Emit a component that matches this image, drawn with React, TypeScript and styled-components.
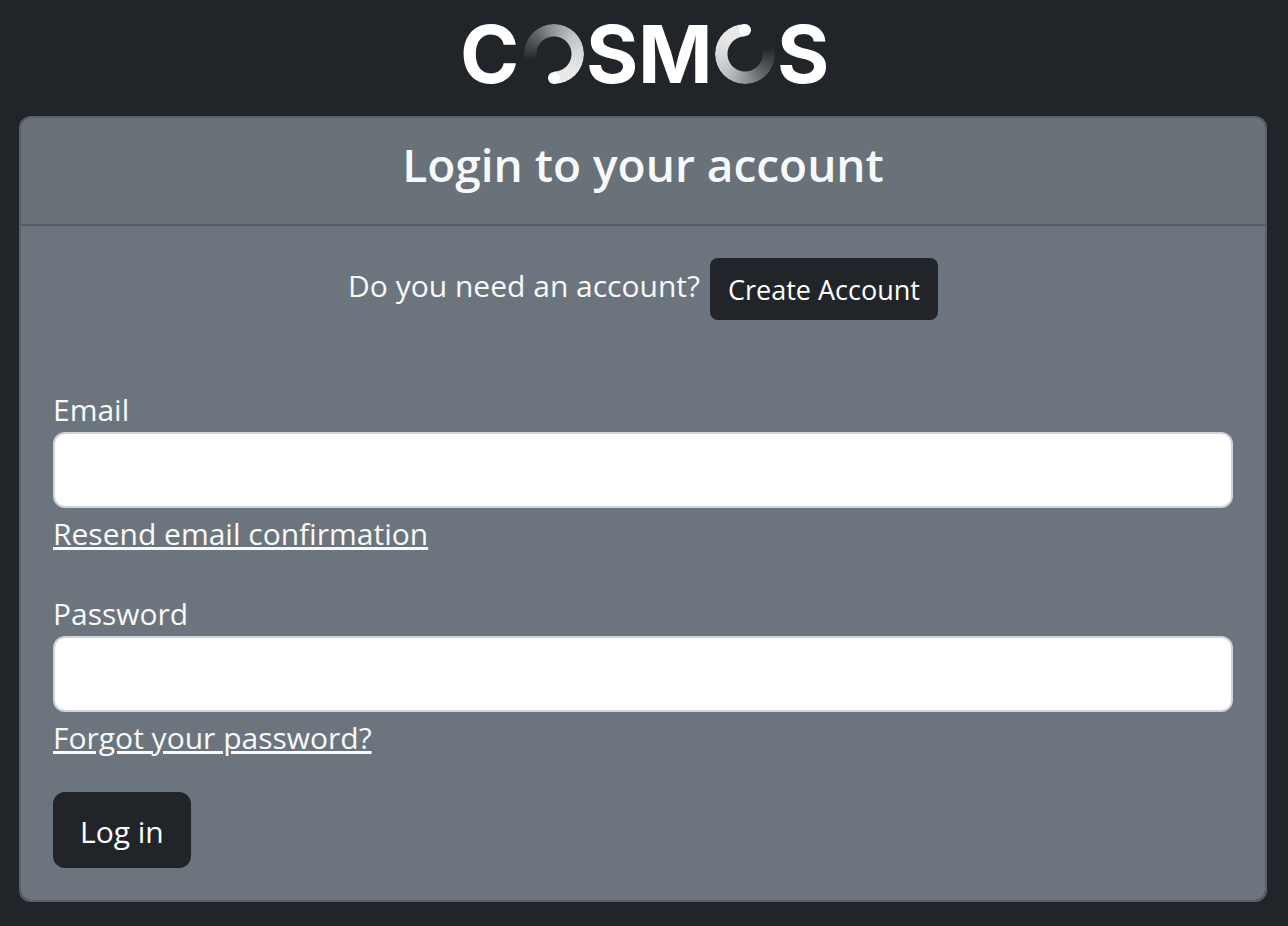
import React from "react";
import styled, { createGlobalStyle } from "styled-components";

const GlobalStyle = createGlobalStyle`
  *, *::before, *::after { box-sizing: border-box; }
  body {
    margin: 0;
    background: #212529;
    color: #f8f9fa;
    font-family: "Open Sans", "Noto Sans", sans-serif;
    font-size: 30px;
    line-height: 48px;
  }
`;

const Page = styled.div`
  display: flex;
  flex-direction: column;
  padding: 24px 21px 24px 19px;
`;

const Brand = styled.header`
  display: flex;
  justify-content: center;
  margin-bottom: 32px;
`;

const LogoSvg = styled.svg`
  display: block;
  overflow: visible;
  width: 366px;
  height: 60px;
`;

const LogoLetter = styled.text`
  font-family: Inter, sans-serif;
  font-size: 80px;
  font-weight: 700;
  fill: #fff;
`;

const RingSweep = styled.div`
  width: 60px;
  height: 60px;
  border-radius: 50%;
  background: conic-gradient(
    from 255deg,
    rgba(255, 255, 255, 0) 0deg,
    rgba(255, 255, 255, 0.08) 15deg,
    rgba(255, 255, 255, 0.28) 60deg,
    rgba(255, 255, 255, 0.52) 105deg,
    rgba(255, 255, 255, 0.72) 150deg,
    rgba(255, 255, 255, 0.83) 195deg,
    rgba(255, 255, 255, 0.9) 240deg,
    rgba(255, 255, 255, 0.9) 285deg,
    rgba(255, 255, 255, 0) 285deg
  );
  mask-image: radial-gradient(circle, transparent 17px, #000 18px);
`;

const Card = styled.main`
  background: #6c757d;
  background-clip: padding-box;
  border: 2px solid #596167;
  border-radius: 12px;
  overflow: hidden;
`;

const CardHeader = styled.div`
  padding: 16px 32px;
  background: #697179;
  border-bottom: 2px solid #565e64;
`;

const Title = styled.h1`
  margin: 0 0 14px;
  font-size: 46px;
  line-height: 60px;
  font-weight: 600;
  text-align: center;
`;

const CardBody = styled.div`
  padding: 32px;
`;

const SignUpRow = styled.div`
  display: flex;
  flex-wrap: wrap;
  justify-content: center;
  align-items: flex-start;
  gap: 10px;
  margin-bottom: 64px;
`;

const Prompt = styled.span`
  line-height: 56px;
`;

const Button = styled.button<{ $small?: boolean }>`
  padding: ${(p) => (p.$small ? "11px 18px 9px" : "16px 27px 12px")};
  border: 0;
  border-radius: ${(p) => (p.$small ? "8px" : "12px")};
  background: #212529;
  color: #fff;
  font-family: inherit;
  font-size: ${(p) => (p.$small ? "27px" : "30px")};
  line-height: ${(p) => (p.$small ? "42px" : "48px")};
  cursor: pointer;
`;

const Field = styled.div`
  display: flex;
  flex-direction: column;
  align-items: flex-start;
  margin-bottom: 28px;
`;

const Label = styled.label`
  padding-top: 4px;
  line-height: 44px;
`;

const Input = styled.input`
  width: 100%;
  height: 76px;
  padding: 12px 24px;
  border: 2px solid #ced4da;
  border-radius: 12px;
  background: #fff;
  color: #212529;
  font: inherit;
`;

const TextLink = styled.a`
  color: #f8f9fa;
  line-height: 52px;
  text-decoration: underline;
`;

function Ring({ cx, rotate = 0 }: { cx: number; rotate?: number }) {
  return (
    <g transform={`translate(${cx} 30) rotate(${rotate})`}>
      <foreignObject x="-30" y="-30" width="60" height="60">
        <RingSweep />
      </foreignObject>
      <circle cx="0" cy="24" r="6" fill="#fff" />
    </g>
  );
}

function Logo() {
  return (
    <LogoSvg viewBox="0 0 366 60" role="img" aria-label="COSMOS">
      <LogoLetter x="0" y="59">C</LogoLetter>
      <Ring cx={94} />
      <LogoLetter x="126" y="59">S</LogoLetter>
      <LogoLetter x="178" y="59">M</LogoLetter>
      <Ring cx={285} rotate={180} />
      <LogoLetter x="317" y="59">S</LogoLetter>
    </LogoSvg>
  );
}

export default function App() {
  return (
    <>
      <GlobalStyle />
      <Page>
        <Brand>
          <Logo />
        </Brand>
        <Card>
          <CardHeader>
            <Title>Login to your account</Title>
          </CardHeader>
          <CardBody>
            <SignUpRow>
              <Prompt>Do you need an account?</Prompt>
              <Button type="button" $small>
                Create Account
              </Button>
            </SignUpRow>
            <form onSubmit={(e) => e.preventDefault()}>
              <Field>
                <Label htmlFor="email">Email</Label>
                <Input id="email" type="email" autoComplete="email" />
                <TextLink href="#resend">Resend email confirmation</TextLink>
              </Field>
              <Field>
                <Label htmlFor="password">Password</Label>
                <Input id="password" type="password" autoComplete="current-password" />
                <TextLink href="#forgot">Forgot your password?</TextLink>
              </Field>
              <Button type="submit">Log in</Button>
            </form>
          </CardBody>
        </Card>
      </Page>
    </>
  );
}
